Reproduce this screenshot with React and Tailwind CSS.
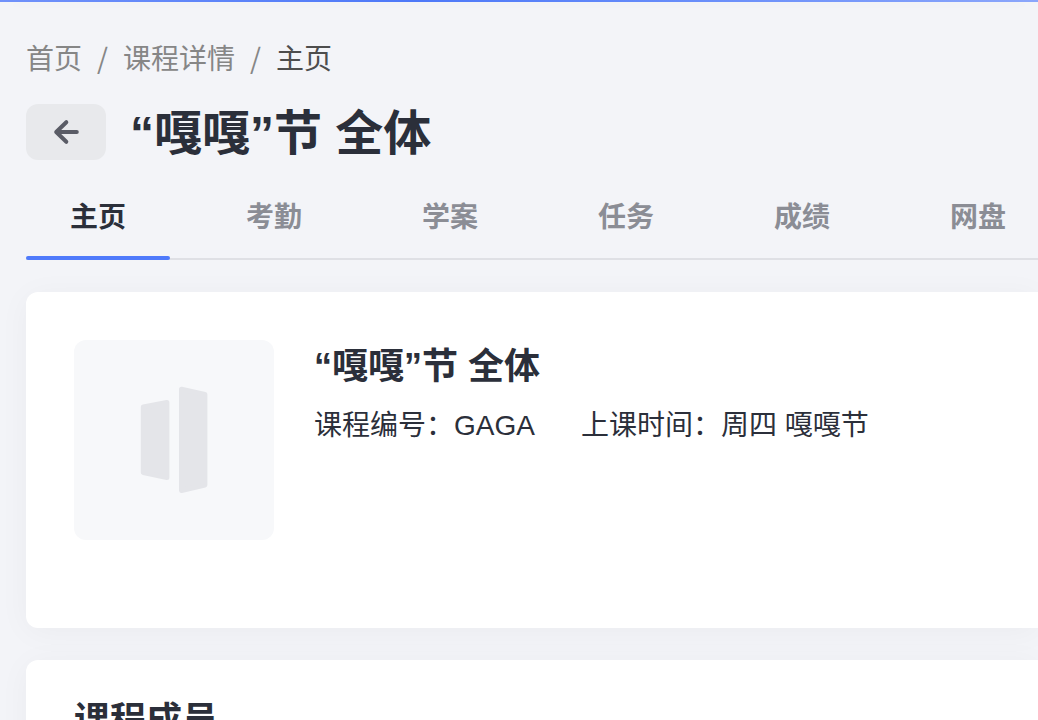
import { useState } from "react";

const tabs = ["主页", "考勤", "学案", "任务", "成绩", "网盘"];

const crumbs = [
  { label: "首页", href: "#home" },
  { label: "课程详情", href: "#course" },
];

function BackIcon() {
  return (
    <svg
      className="h-7 w-7"
      viewBox="0 0 28 28"
      fill="none"
      stroke="currentColor"
      strokeWidth="4"
      strokeLinecap="round"
      strokeLinejoin="round"
      aria-hidden="true"
    >
      <path d="M14.3 4.2 4.2 14l10.1 9.8M5 14h19.8" />
    </svg>
  );
}

function CoverLogo() {
  return (
    <svg
      className="h-[108px] w-[68px] text-[#e4e5e9]"
      viewBox="0 0 68 108"
      fill="currentColor"
      stroke="currentColor"
      strokeWidth="5"
      strokeLinejoin="round"
      aria-hidden="true"
    >
      <path d="M3.3 21 26.9 16.5v75L3.3 86.5z" />
      <path d="M41.5 3.3 64.9 8.5v90.6L41.5 104.5z" />
    </svg>
  );
}

export default function App() {
  const [active, setActive] = useState("主页");

  return (
    <div
      lang="zh-CN"
      className="min-h-screen overflow-hidden bg-[#f3f4f8] font-['Liberation_Sans','Noto_Sans_CJK_SC',sans-serif] text-[#2b2f3a]"
    >
      <header className="h-0.5 bg-linear-to-r from-[#7091fa] via-[#4d78f8] via-40% to-[#8ba6fb] shadow-[0_4px_16px_rgba(0,0,0,0.04)]" />

      <main className="pl-[26px]">
        <nav
          aria-label="面包屑"
          className="flex pt-[34px] font-['Noto_Sans_CJK_SC',sans-serif] text-[28px] leading-[42px] text-[#868686]"
        >
          {crumbs.map((crumb) => (
            <div key={crumb.label}>
              <a href={crumb.href}>{crumb.label}</a>
              <span className="mx-[15px]">/</span>
            </div>
          ))}
          <span className="text-[#4d4d4d]">主页</span>
        </nav>

        <div className="mt-5 flex items-center gap-6">
          <button
            type="button"
            aria-label="返回"
            className="flex h-14 w-20 items-center justify-center rounded-xl bg-[#e8e9ec] text-[#5a5c66]"
          >
            <BackIcon />
          </button>
          <h1 className="pt-1 text-[48px] leading-[64px] font-bold">“嘎嘎”节 全体</h1>
        </div>

        <div role="tablist" className="mt-1 flex gap-8 border-b-2 border-[#dfe0e5]">
          {tabs.map((tab) => (
            <button
              key={tab}
              type="button"
              role="tab"
              aria-selected={tab === active}
              onClick={() => setActive(tab)}
              className={`relative h-[88px] w-36 shrink-0 pt-2 text-[28px] leading-10 font-bold ${
                tab === active ? "text-[#2b2f3a]" : "text-[#8b8d95]"
              }`}
            >
              {tab}
              {tab === active && (
                <span className="absolute inset-x-0 -bottom-0.5 h-1 rounded-full bg-[#4f7afb]" />
              )}
            </button>
          ))}
        </div>

        <section className="mt-8 flex min-h-[336px] items-start gap-10 rounded-l-xl bg-white p-12 shadow-[0_4px_32px_rgba(0,0,0,0.04)]">
          <div className="flex h-[200px] w-[200px] shrink-0 items-center justify-center rounded-xl bg-[#f7f8fa]">
            <CoverLogo />
          </div>
          <div>
            <h2 className="text-[36px] leading-[54px] font-bold">“嘎嘎”节 全体</h2>
            <div className="mt-3 flex gap-[46px] text-[28px] leading-10">
              <p>课程编号：GAGA</p>
              <p>上课时间：周四 嘎嘎节</p>
            </div>
          </div>
        </section>

        <section className="mt-8 rounded-l-xl bg-white px-12 py-[34px] shadow-[0_4px_32px_rgba(0,0,0,0.04)]">
          <h2 className="text-[36px] leading-[54px] font-bold">课程成员</h2>
        </section>
      </main>
    </div>
  );
}
